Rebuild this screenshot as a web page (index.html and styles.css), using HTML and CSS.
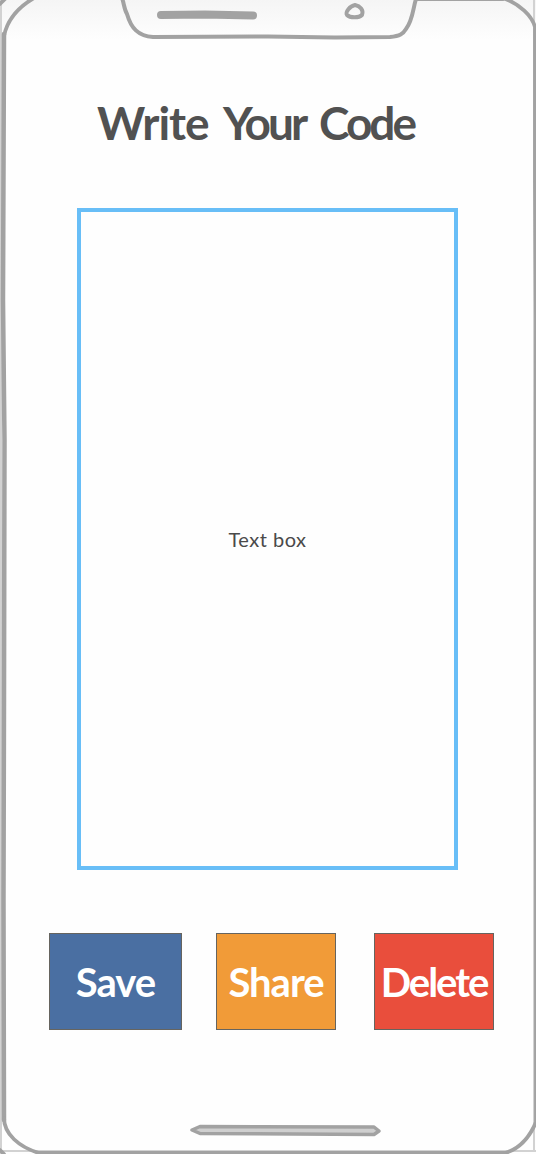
FILE: index.html
```html
<!DOCTYPE html>
<html lang="en">
<head>
<meta charset="utf-8">
<title>Write Your Code</title>
<link rel="stylesheet" href="styles.css">
</head>
<body>
<main class="phone">
  <svg class="frame" viewBox="0 0 536 1154" aria-hidden="true">
    <g class="edge">
      <path d="M1 0V1154M0 1151H536M534 0V1151"/>
    </g>
    <g class="outline">
      <path class="side" d="M4 34L3.5 170L3 300L4 395L4.5 440L4 700L3.5 900L4 1120"/>
      <path class="curve" d="M4 36C7 21 17 8 34 -2M0 4L5 -1"/>
      <path class="curve" d="M503 -2C520 4 532 16 535 27V180L536 320L535.500 600L536 900V1122C531 1134 522 1148 505 1153"/>
      <path class="curve" d="M4 1118C4 1134 19 1147 39 1153H505M0 1150L4 1154"/>
      <path d="M122 -2C124 3 124 9 127 14C131 28 138 36 153 37L268 36.500L335 37.500L390 37C400 36 403 34 406 29C413 20 413 8 416 -1H503"/>
      <path class="speaker" d="M161 15L205 14.500L253 15.500"/>
      <path d="M355 5C350 6 345 12 347 15C350 18 359 18 362 15C364 10 360 6 355 5Z"/>
      <path class="home" d="M192 1130L200 1126.500L374 1127L379 1131L374 1134.500L200 1133.500Z"/>
    </g>
  </svg>
  <h1 class="title"><span class="write">Write</span> <span class="your">Your</span> <span class="code">Code</span></h1>
  <section class="editor">Text box</section>
  <nav class="actions">
    <button class="action save"><span class="label">Save</span></button>
    <button class="action share"><span class="label">Share</span></button>
    <button class="action delete"><span class="label">Delete</span></button>
  </nav>
</main>
</body>
</html>
```
FILE: styles.css
```css
* { box-sizing: border-box; }
body { margin: 0; background: #fefefe; font-family: Lato, sans-serif; }
.phone {
  position: relative;
  width: 536px;
  height: 1154px;
  overflow: hidden;
  display: flex;
  flex-direction: column;
  background: linear-gradient(#f5f5f5 0, #fefefe 40px);
}
.frame { position: absolute; inset: 0; width: 536px; height: 1154px; pointer-events: none; }
.edge { fill: none; stroke: #d2d2d2; stroke-width: 2; }
.outline { fill: none; stroke: #a2a2a2; stroke-width: 4; stroke-linecap: round; stroke-linejoin: round; }
.side { stroke-width: 4.5; }
.curve { stroke-width: 3.8; }
.speaker { stroke-width: 8; }
.home { fill: #cfcfcf; stroke-width: 3.5; }
.title {
  display: flex;
  gap: 16px;
  margin: 96px 0 0 97px;
  height: 54px;
  line-height: 54px;
  font-size: 46px;
  font-weight: 700;
  white-space: nowrap;
  color: #515151;
}
.write { width: 110px; letter-spacing: -1px; }
.your { width: 80px; letter-spacing: -3px; }
.code { width: 95px; letter-spacing: -3px; }
.editor {
  width: 381px;
  height: 662px;
  margin: 58px 0 0 77px;
  border: 4px solid #68bef7;
  display: flex;
  align-items: center;
  justify-content: center;
  font-size: 20px;
  letter-spacing: 0.5px;
  color: #4a4a4a;
}
.actions { display: flex; align-items: flex-start; margin: 63px 0 0 49px; }
.action {
  height: 97px;
  padding: 0;
  border: 1px solid #66645f;
  display: flex;
  align-items: center;
  justify-content: center;
  font: 700 40px/48px Lato, sans-serif;
  color: #fff;
}
.save { width: 133px; background: #4a6fa2; }
.share { width: 120px; margin-left: 34px; background: #f19b38; }
.delete { width: 120px; margin-left: 38px; background: #e94e3c; }
.label { letter-spacing: -1px; }
.delete .label { letter-spacing: -2px; }
```
